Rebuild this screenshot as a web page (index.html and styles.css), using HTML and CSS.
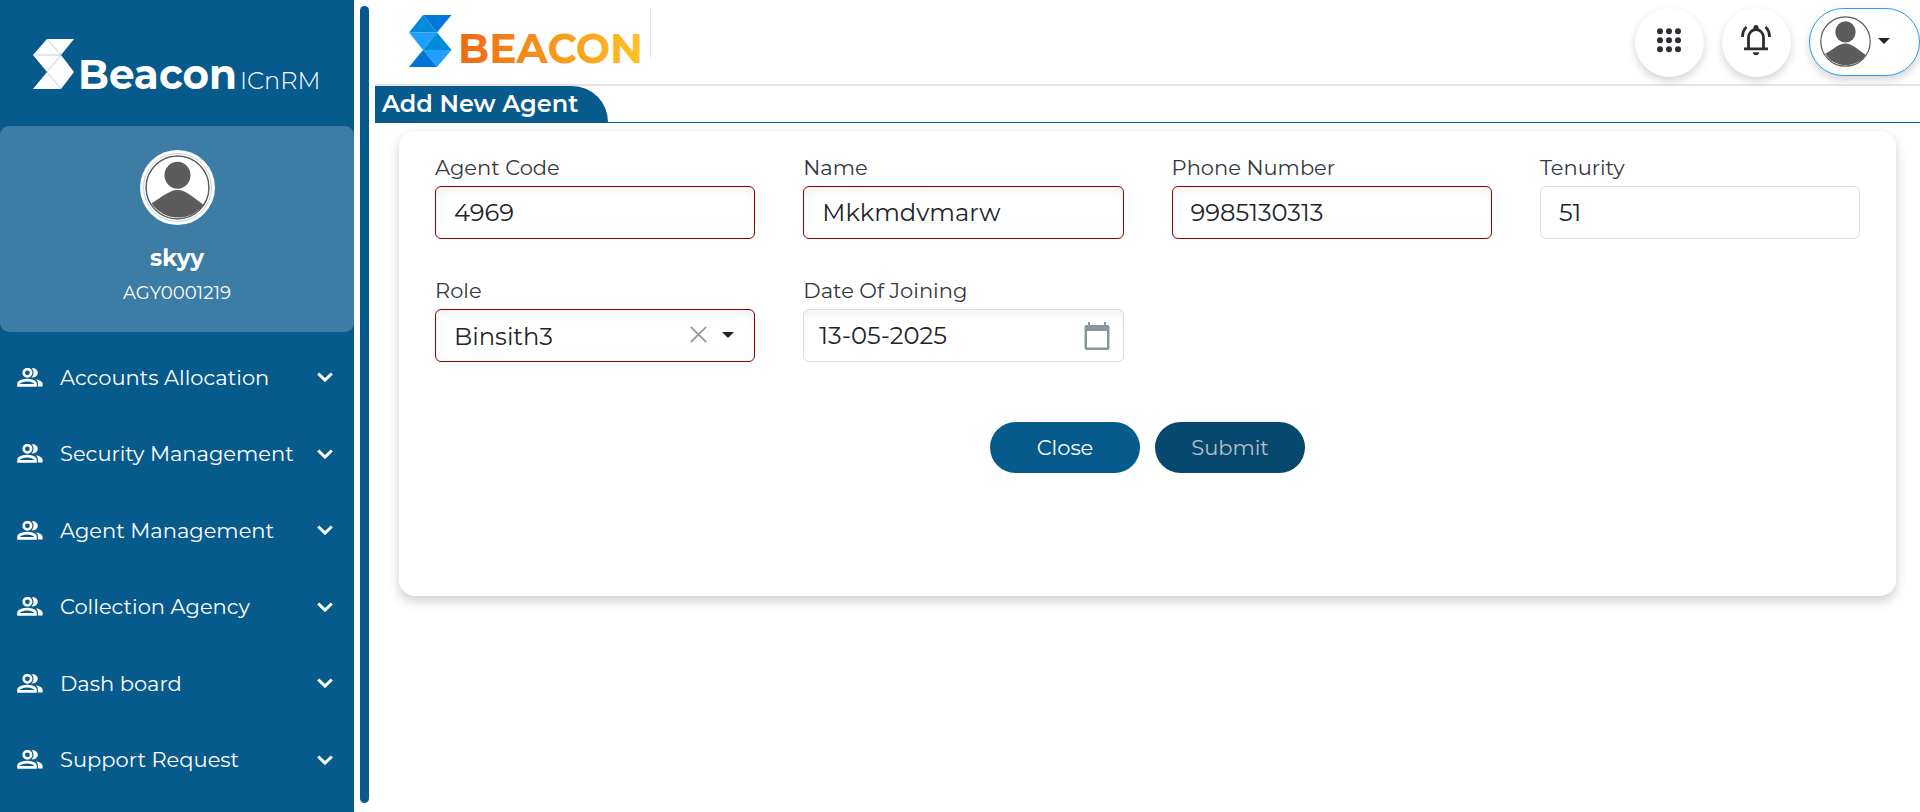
FILE: index.html
```html
<!DOCTYPE html>
<html lang="en">
<head>
<meta charset="utf-8">
<title>Add New Agent</title>
<link rel="stylesheet" href="styles.css">
</head>
<body>
<svg class="defs" aria-hidden="true">
  <symbol id="people" viewBox="0 0 26 19">
    <circle cx="10.4" cy="4.8" r="3.7" fill="none" stroke="#fff" stroke-width="2.6"/>
    <path d="M14.6 0.3C18 -0.5 20.8 1.9 20.8 4.8S18 10 14.6 9.4C17.2 6.6 17.2 3 14.6 .3Z" fill="#fff"/>
    <path d="M1.6 17.3V15.7C1.6 13.4 6.8 12.2 10.2 12.2S18.4 13.4 18.4 15.7V17.3Z" fill="none" stroke="#fff" stroke-width="2.8"/>
    <path d="M19 11.3C22.8 12 25.6 13.6 25.6 16V18.4H20.9V15.6C20.9 13.8 20.2 12.4 19 11.3Z" fill="#fff"/>
  </symbol>
  <symbol id="chevron" viewBox="0 0 16 10">
    <path d="M1.2 1.5L8 8.1L14.8 1.5" fill="none" stroke="#fff" stroke-width="3"/>
  </symbol>
  <symbol id="avatar" viewBox="0 0 64 64">
    <circle cx="32" cy="32" r="31" fill="#fff" stroke="#5c5c5c" stroke-width="1.5"/>
    <ellipse cx="32" cy="20" rx="12.8" ry="13.3" fill="#5c5c5c"/>
    <path d="M6.5 47.5C16 42 24 34.5 32 34.5S48 42 57.5 49A31 31 0 0 1 6.500 47.500Z" fill="#5c5c5c"/>
  </symbol>
</svg>
<div class="app">
  <aside class="sidebar">
    <div class="brand">
      <svg class="brand-art" viewBox="0 0 290 54" role="img" aria-label="Beacon ICnRM">
        <path d="M14 0H41L28 16L41 33L28 50H0L14 33L0 16Z" fill="#fff"/>
        <path d="M14 0L28 16H0M28 16L14 33L28 50" fill="none" stroke="#a9c4d6" stroke-width=".8"/>
        <text class="brand-bold" x="45" y="50" textLength="159" lengthAdjust="spacingAndGlyphs">Beacon</text>
        <text class="brand-thin" x="207" y="50" textLength="80.500" lengthAdjust="spacingAndGlyphs">ICnRM</text>
      </svg>
    </div>
    <div class="profile">
      <div class="profile-pic"><svg><use href="#avatar"/></svg></div>
      <div class="profile-name">skyy</div>
      <div class="profile-id">AGY0001219</div>
    </div>
    <nav class="menu">
      <a class="item"><svg class="i-people"><use href="#people"/></svg><span>Accounts Allocation</span><svg class="i-chev"><use href="#chevron"/></svg></a>
      <a class="item"><svg class="i-people"><use href="#people"/></svg><span>Security Management</span><svg class="i-chev"><use href="#chevron"/></svg></a>
      <a class="item"><svg class="i-people"><use href="#people"/></svg><span>Agent Management</span><svg class="i-chev"><use href="#chevron"/></svg></a>
      <a class="item"><svg class="i-people"><use href="#people"/></svg><span>Collection Agency</span><svg class="i-chev"><use href="#chevron"/></svg></a>
      <a class="item"><svg class="i-people"><use href="#people"/></svg><span>Dash board</span><svg class="i-chev"><use href="#chevron"/></svg></a>
      <a class="item"><svg class="i-people"><use href="#people"/></svg><span>Support Request</span><svg class="i-chev"><use href="#chevron"/></svg></a>
    </nav>
  </aside>
  <div class="scroll"></div>
  <main class="main">
    <header class="header">
      <svg class="logo" viewBox="0 0 240 54" role="img" aria-label="BEACON">
        <defs><linearGradient id="gold" gradientUnits="userSpaceOnUse" x1="52" y1="0" x2="232" y2="0"><stop offset="0" stop-color="#ee6a14"/><stop offset="1" stop-color="#ffc125"/></linearGradient></defs>
        <path d="M14 0L0 17.500H28Z" fill="#008bda"/>
        <path d="M14 0H42.500L28 17.500Z" fill="#0077d9"/>
        <path d="M0 17.500H28L14 35Z" fill="#1f9fff"/>
        <path d="M28 17.500L42.500 35H14Z" fill="#008bda"/>
        <path d="M14 35H42.500L28 52Z" fill="#1f9fff"/>
        <path d="M14 35L28 52H0Z" fill="#0074d6"/>
        <text class="logo-text" x="49" y="48" fill="url(#gold)" textLength="185" lengthAdjust="spacingAndGlyphs">BEACON</text>
      </svg>
      <div class="divider"></div>
      <div class="tools">
        <button class="round"><svg width="24" height="25" viewBox="0 0 24 25" fill="#2b2d33"><circle cx="3" cy="3.300" r="3"/><circle cx="12" cy="3.300" r="3"/><circle cx="21" cy="3.300" r="3"/><circle cx="3" cy="12.300" r="3"/><circle cx="12" cy="12.300" r="3"/><circle cx="21" cy="12.300" r="3"/><circle cx="3" cy="21.300" r="3"/><circle cx="12" cy="21.300" r="3"/><circle cx="21" cy="21.300" r="3"/></svg></button>
        <button class="round"><svg width="30" height="31" viewBox="0 0 30 31"><path d="M7.500 23.500V12.500A7.500 8 0 0 1 22.500 12.500V23.500M3 23.900H27M1.500 12Q1.500 5.500 5.500 2M28.500 12Q28.500 5.500 24.500 2" fill="none" stroke="#2b2d33" stroke-width="2.800"/><path d="M12.500 4V2.500A2.500 2.500 0 0 1 17.500 2.500V4ZM12 27.300H18A3 3 0 0 1 12 27.300Z" fill="#2b2d33"/></svg></button>
        <button class="account"><svg class="account-pic"><use href="#avatar"/></svg><svg width="12" height="6" viewBox="0 0 12 6"><path d="M0 0H12L6 6Z" fill="#212529"/></svg></button>
      </div>
    </header>
    <div class="tabs"><div class="tab">Add New Agent</div></div>
    <section class="card">
      <div class="grid">
        <div class="field"><label>Agent Code</label><div class="input required">4969</div></div>
        <div class="field"><label>Name</label><div class="input required">Mkkmdvmarw</div></div>
        <div class="field"><label>Phone Number</label><div class="input required">9985130313</div></div>
        <div class="field"><label>Tenurity</label><div class="input plain">51</div></div>
        <div class="field"><label>Role</label><div class="input required select"><span class="choice">Binsith3</span><svg class="clear" width="17" height="17" viewBox="0 0 17 17"><path d="M.8 .8L16.200 16.200M16.200 .8L.8 16.200" stroke="#999" stroke-width="1.900"/></svg><svg class="caret" width="12" height="6" viewBox="0 0 12 6"><path d="M0 0H12L6 6Z" fill="#212529"/></svg></div></div>
        <div class="field"><label>Date Of Joining</label><div class="input date"><span>13-05-2025</span><svg width="26" height="28" viewBox="0 0 26 28"><path d="M2.500 3H4V0H6V3H20V0H22V3H23.500Q25.500 3 25.500 5V26Q25.500 28 23.500 28H2.500Q.5 28 .5 26V5Q.5 3 2.500 3ZM3 9V25.500H23V9Z" fill="#87979c" fill-rule="evenodd"/></svg></div></div>
      </div>
      <div class="actions"><button class="btn">Close</button><button class="btn disabled">Submit</button></div>
    </section>
  </main>
</div>
</body>
</html>
```
FILE: styles.css
```css
* { box-sizing: border-box; }
body { margin: 0; background: #fff; color: #212529; font-family: Montserrat, Inter, "Open Sans", sans-serif; overflow: hidden; }
.defs { display: none; }
button { font: inherit; border: 0; padding: 0; }
.app { display: flex; height: 812px; }
.sidebar { width: 354px; background: #075a8c; color: #fff; flex: none; }
.brand { height: 126px; padding: 39px 0 0 33px; }
.brand-art { display: block; width: 290px; height: 54px; overflow: visible; }
.brand-bold { font-size: 42px; font-weight: 700; fill: #fff; }
.brand-thin { font-size: 24px; font-weight: 300; fill: #fff; }
.profile { height: 206px; border-radius: 9px; background: #3c7ca5; display: flex; flex-direction: column; align-items: center; padding-top: 24px; }
.profile-pic { width: 75px; height: 75px; border-radius: 50%; background: #fff; display: grid; place-items: center; }
.profile-pic svg { width: 65px; height: 65px; border-radius: 50%; outline: 1px solid #bed3e0; outline-offset: 1px; }
.profile-name { margin-top: 18px; font-size: 23px; line-height: 30px; font-weight: 700; }
.profile-id { margin-top: 8px; font-size: 18.100px; line-height: 24px; font-weight: 400; }
.menu { padding-top: 7px; }
.item { height: 76.500px; display: flex; align-items: center; padding: 0 21px 0 17px; font-size: 21px; font-weight: 430; }
.i-people { width: 26px; height: 19px; margin-right: 17px; }
.i-chev { width: 16px; height: 10px; margin-left: auto; }
.scroll { width: 9px; height: 797px; margin: 6px 6px 0; border-radius: 5px; background: #075a8c; flex: none; }
.main { flex: 1; min-width: 0; }
.header { height: 86px; border-bottom: 2px solid #e4e4e4; display: flex; padding-left: 34px; }
.logo { width: 240px; height: 54px; margin-top: 15px; overflow: visible; }
.logo-text { font-size: 41px; font-weight: 700; }
.divider { width: 1px; height: 50px; margin: 8px 0 0 1px; background: #e6e6e6; }
.tools { margin: 8px 0 0 auto; display: flex; gap: 18px; }
.round { width: 69px; height: 69px; border-radius: 50%; background: #fff; box-shadow: 0 4px 9px rgba(0,0,0,.17); display: flex; justify-content: center; align-items: flex-start; padding: 17px 1px 0 0; }
.round:first-child { padding-top: 20px; }
.account { width: 111px; height: 68px; border: 1px solid #1f9fff; border-radius: 34px; background: #fff; box-shadow: 0 4px 9px rgba(0,0,0,.17); display: flex; align-items: center; padding: 0 0 2px 9.500px; gap: 7px; }
.account-pic { width: 51px; height: 51px; }
.tabs { height: 37px; border-bottom: 1px solid #075a8c; }
.tab { width: 233px; height: 37px; border-radius: 0 36px 0 0; background: #075a8c; color: #fff; padding-left: 7px; font-size: 24px; line-height: 35px; font-weight: 600; white-space: nowrap; }
.card { width: 1497px; height: 465px; margin: 8px 0 0 24px; padding: 24px 36px; border-radius: 16px; box-shadow: 0 5px 12px rgba(0,0,0,.2); }
.grid { display: grid; grid-template-columns: repeat(4, 320.300px); column-gap: 48px; row-gap: 39px; }
.field { height: 84px; }
label { display: block; height: 31px; line-height: 26px; font-size: 21px; font-weight: 400; color: #33383d; }
.input { height: 53px; border: 1px solid #dcdcdc; border-radius: 6px; display: flex; align-items: center; padding-left: 18px; font-size: 24.200px; font-weight: 380; box-shadow: inset 0 6px 8px -2px rgba(0,0,0,.06); }
.required { border-color: #8b0000; }
.plain { box-shadow: none; }
.select { padding-right: 20px; gap: 15px; }
.choice { padding-top: 2px; }
.clear { margin: 0 0 2px auto; }
.caret { margin-bottom: 2px; }
.date { padding: 0 13px 0 15px; justify-content: space-between; }
.actions { display: flex; justify-content: center; gap: 15px; margin-top: 60px; }
.btn { width: 150px; height: 51px; border-radius: 26px; background: #075a8c; color: #fff; font-size: 21px; }
.btn:not(.disabled) { font-weight: 430; }
.disabled { background: #07486f; color: #b8c0c6; }
```
